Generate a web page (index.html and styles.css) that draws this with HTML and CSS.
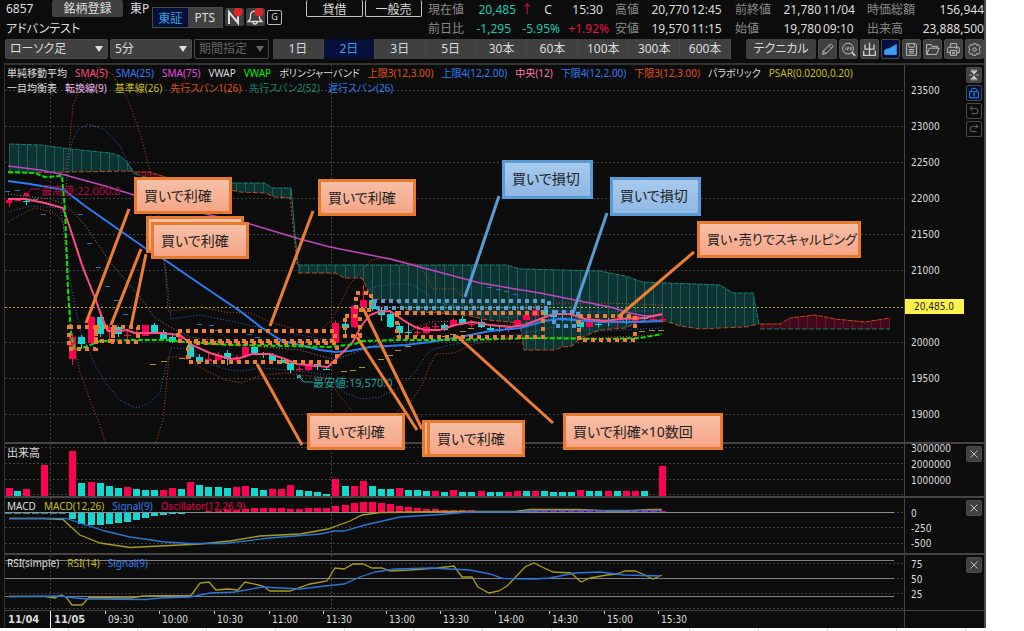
FILE: index.html
```html
<!DOCTYPE html>
<html lang="ja">
<head>
    <meta charset="UTF-8">
    <meta name="viewport" content="width=device-width, initial-scale=1.0">
    <title>6857 アドバンテスト</title>
    <link rel="stylesheet" href="styles.css">
</head>
<body>
<div class="app">
    <header class="header">
        <div class="issue">
            <div class="issue-row">
                <span class="code">6857</span>
                <button class="register">銘柄登録</button>
                <span>東P</span>
            </div>
            <div class="name">アドバンテスト</div>
        </div>
        <div class="market">
            <button class="seg active">東証</button><button class="seg">PTS</button>
        </div>
        <div class="badges">
            <button class="badge" aria-label="ニュース">
                <svg width="18" height="18" viewBox="0 0 18 18"><path d="M4 16V4L13 15V4" fill="none" stroke="#ddd" stroke-width="2"/><circle cx="13" cy="4" r="4.5" fill="#dc2626"/></svg>
            </button>
            <button class="badge" aria-label="アラート">
                <svg width="18" height="18" viewBox="0 0 18 18"><path d="M2 13.5h14l-2.5-3V7.5a4.5 4.5 0 0 0-9 0v3zM7 14a2 2 0 0 0 4 0" fill="none" stroke="#ddd" stroke-width="1.3"/><circle cx="13" cy="4" r="4.5" fill="#dc2626"/></svg>
            </button>
            <button class="badge-g">G</button>
        </div>
        <div class="margin-type">
            <button>貸借</button>
            <button>一般売</button>
        </div>
        <div class="quote">
            <span class="lbl">現在値</span><span class="num down">20,485</span><span class="arrow">↑ <b>C</b></span><span class="num time-now">15:30</span>
            <span class="lbl">高値</span><span class="num">20,770</span><span class="at">12:45</span>
            <span class="lbl">前終値</span><span class="num">21,780</span><span class="at">11/04</span>
            <span class="lbl">時価総額</span><span class="num">156,944</span>

            <span class="lbl">前日比</span><span class="num down diff">-1,295</span><span class="num down">-5.95%</span><span class="num up">+1.92%</span>
            <span class="lbl">安値</span><span class="num">19,570</span><span class="at">11:15</span>
            <span class="lbl">始値</span><span class="num">19,780</span><span class="at">09:10</span>
            <span class="lbl">出来高</span><span class="num">23,888,500</span>
        </div>
    </header>

    <nav class="toolbar">
        <span class="picker kind"><select aria-label="足種"><option>ローソク足</option></select></span>
        <span class="picker span"><select aria-label="分足"><option>5分</option></select></span>
        <span class="picker range off"><select aria-label="期間" disabled><option>期間指定</option></select></span>
        <div class="tabs">
            <button>1日</button><button class="active">2日</button><button>3日</button><button>5日</button><button>30本</button><button>60本</button><button>100本</button><button>300本</button><button>600本</button>
        </div>
        <button class="technical">テクニカル</button>
        <div class="tools">
            <button aria-label="描画"><svg viewBox="0 0 19 19"><path d="M4 15l1-4 7-7q1-1 2 0l1 1q1 1 0 2l-7 7zM11 5l3 3M5 11l3 3"/></svg></button>
            <button aria-label="拡大"><svg viewBox="0 0 19 19"><circle cx="9" cy="8.5" r="6"/><path d="M13 12.5l4 4" stroke-width="2"/><path d="M6.5 7v3M8 7h1.5v1.5H8V10h1.5M11 7h1.5v3H11M11 8.5h1.5" stroke-width=".8"/></svg></button>
            <button aria-label="出来高表示"><svg viewBox="0 0 19 19"><path d="M9.5 2v14M4.5 4v5h10V4M3 11v5h13v-5" stroke-width="1.5"/></svg></button>
            <button class="active" aria-label="チャート"><svg viewBox="0 0 19 19"><path d="M3 15V10h2V9h3V8h2V7h2V6h2V5l2-1v11z" fill="#3b9bf5" stroke="#3b9bf5"/></svg></button>
            <button aria-label="保存"><svg viewBox="0 0 19 19"><path d="M4 3h10l1 1v12H4zM6.5 3v4h6V3M6.5 9.5h6M6.5 11.5h6M6.5 13.5h6"/></svg></button>
            <button aria-label="開く"><svg viewBox="0 0 19 19"><path d="M3 15V4h5l1 2h6v2M3 15L6 8h11l-3 7z"/></svg></button>
            <button aria-label="印刷"><svg viewBox="0 0 19 19"><path d="M6 7V3h7v4M6 13H3V8q0-1 1-1h11q1 0 1 1v5h-3M6 10.5h7V16H6zM8 12.5h3M8 14h3M12 8.5h2"/></svg></button>
            <button aria-label="設定"><svg viewBox="0 0 19 19"><circle cx="9.5" cy="9.5" r="2"/><path d="M8 3h3l1 2 2-1 2 3-1 1.500v2l1 1.500-2 3-2-1-1 2H8l-1-2-2 1-2-3 1-1.500v-2L3 7l2-3 2 1z"/></svg></button>
        </div>
    </nav>

    <main class="chart">
        <section class="pane price">
            <svg id="price" class="plot" viewBox="5 65 899 377" preserveAspectRatio="none"></svg>
            <div class="legend">
                <div><span>単純移動平均</span><span class="c-pink">SMA(5)</span><span class="c-blue">SMA(25)</span><span class="c-purple">SMA(75)</span><span>VWAP</span><span class="c-green">VWAP</span><span>ボリンジャーバンド</span><span class="c-orange">上限3(12,3.00)</span><span class="c-blue">上限4(12,2.00)</span><span class="c-rose">中央(12)</span><span class="c-blue">下限4(12,2.00)</span><span class="c-orange">下限3(12,3.00)</span><span>パラボリック</span><span class="c-yellow">PSAR(0.0200,0.20)</span></div>
                <div><span>一目均衡表</span><span class="c-lilac">転換線(9)</span><span class="c-yellow">基準線(26)</span><span class="c-orange">先行スパン1(26)</span><span class="c-teal">先行スパン2(52)</span><span class="c-blue">遅行スパン(26)</span></div>
            </div>
            <span class="mark high">最高値:22,000.0</span>
            <span class="mark low">最安値:19,570.0</span>
            <div class="axis">
                <div class="ticks"><span>23500</span><span>23000</span><span>22500</span><span>22000</span><span>21500</span><span>21000</span><span><mark>20,485.0</mark></span><span>20000</span><span>19500</span><span>19000</span></div>
                <div class="side">
                    <button aria-label="縮小"><svg viewBox="0 0 16 16"><path d="M4 2.5h8M4 13.5h8M2.5 8h3M7 8h2M10.5 8h3"/><path d="M5 4h6L8 6.5zM5 12h6L8 9.5z" fill="#ccc"/></svg></button>
                    <button class="active" aria-label="固定"><svg viewBox="0 0 16 16"><path d="M3 6.5h10v7H3zM5 6V4q0-1.5 3-1.5T11 4v2M8 8v4M7 9h2"/></svg></button>
                    <button class="hollow" aria-label="元に戻す"><svg viewBox="0 0 16 16"><path d="M6 2.5L3.5 5 6 7.5M4 5h6q2.5 0 2.5 3T10 11H5"/></svg></button>
                    <button class="hollow" aria-label="やり直す"><svg viewBox="0 0 16 16"><path d="M10 2.5L12.5 5 10 7.5M12 5H6q-2.5 0-2.5 3T6 11h5"/></svg></button>
                </div>
            </div>
        </section>
        <section class="pane volume">
            <svg id="volume" class="plot" viewBox="5 444 899 52" preserveAspectRatio="none"></svg>
            <div class="legend title"><div><span>出来高</span></div></div>
            <div class="axis">
                <div class="ticks"><span>3000000</span><span>2000000</span><span>1000000</span></div>
                <div class="side"><button aria-label="閉じる"><svg viewBox="0 0 16 16"><path d="M4 4l8 8M12 4l-8 8"/></svg></button></div>
            </div>
        </section>
        <section class="pane macd">
            <svg id="macd" class="plot" viewBox="5 498 899 55" preserveAspectRatio="none"></svg>
            <div class="legend"><div><span>MACD</span><span class="c-yellow">MACD(12,26)</span><span class="c-blue">Signal(9)</span><span class="c-red">Oscillator(12,26,9)</span></div></div>
            <div class="axis">
                <div class="ticks"><span>0</span><span>-250</span><span>-500</span></div>
                <div class="side"><button aria-label="閉じる"><svg viewBox="0 0 16 16"><path d="M4 4l8 8M12 4l-8 8"/></svg></button></div>
            </div>
        </section>
        <section class="pane rsi">
            <svg id="rsi" class="plot" viewBox="5 555 899 55" preserveAspectRatio="none"></svg>
            <div class="legend"><div><span>RSI(simple)</span><span class="c-yellow">RSI(14)</span><span class="c-blue">Signal(9)</span></div></div>
            <div class="axis">
                <div class="ticks"><span>75</span><span>50</span><span>25</span></div>
                <div class="side"><button aria-label="閉じる"><svg viewBox="0 0 16 16"><path d="M4 4l8 8M12 4l-8 8"/></svg></button></div>
            </div>
        </section>
        <div class="timeline">
            <div class="times"><b>11/04</b><b class="day">11/05</b><span>09:30</span><span>10:00</span><span>10:30</span><span>11:00</span><span>11:30</span><span>13:00</span><span>13:30</span><span>14:00</span><span>14:30</span><span>15:00</span><span>15:30</span></div>
            <div class="corner"></div>
        </div>

        <!-- Trade notes over the chart -->
        <svg id="notes" class="notes" viewBox="5 65 899 563" preserveAspectRatio="none"></svg>
        <div class="note n1">買いで利確</div>
        <div class="note n2b"></div>
        <div class="note n2">買いで利確</div>
        <div class="note n3">買いで利確</div>
        <div class="note blue n4">買いで損切</div>
        <div class="note blue n5">買いで損切</div>
        <div class="note n6">買い・売りでスキャルピング</div>
        <div class="note n7">買いで利確</div>
        <div class="note n8b"></div>
        <div class="note n8">買いで利確</div>
        <div class="note n9">買いで利確×10数回</div>
    </main>
</div>
<footer class="sheet"></footer>
<script src="chart.js"></script>
</body>
</html>
```

FILE: styles.css
```css
:root {
    --bg: #0c0c0c;
    --btn: #404040;
    --line: #444444;
    --text: #dddddd;
    --muted: #8a8a8a;
    --navy: #04103a;
}

* {
    box-sizing: border-box;
}

body {
    margin: 0;
    background-color: #ffffff;
    color: var(--text);
    font-family: "Noto Sans", "Noto Sans CJK JP", sans-serif;
    font-size: 12px;
    font-feature-settings: "palt";
}

.app {
    margin-right: 38px;
    background-color: var(--bg);
    border-right: 2px solid #4a4a4a;
    overflow: hidden;
}

button, select {
    margin: 0;
    padding: 0;
    border: none;
    border-radius: 2px;
    background-color: var(--btn);
    color: var(--text);
    font: inherit;
    font-feature-settings: inherit;
}

/* Header */
.header {
    display: flex;
    align-items: flex-start;
    height: 39px;
    white-space: nowrap;
}

.issue {
    width: 152px;
    padding-left: 6px;
}

.issue-row {
    display: flex;
    height: 18px;
    line-height: 17px;
}

.code {
    width: 46px;
}

.register {
    width: 71px;
    height: 17px;
    margin-right: 7px;
}

.name {
    font-size: 12px;
    line-height: 21px;
}

.market {
    display: flex;
    width: 71px;
    height: 21px;
    margin: 7px 2px 0 0;
    border: 1px solid #4a4a4a;
}

.seg {
    flex: 1;
    border-radius: 0;
}

.seg.active, .tabs .active {
    background-color: var(--navy);
    color: #35a5e5;
}

.badges {
    display: flex;
    align-items: center;
    gap: 2px;
    width: 81px;
    margin-top: 8px;
}

.badge {
    width: 19px;
    height: 18px;
}

.badge svg {
    display: block;
}

.badge-g {
    width: 15px;
    height: 15px;
    border: 1px solid #bbbbbb;
    background-color: transparent;
    font-size: 9px;
    line-height: 12px;
}

.margin-type {
    display: flex;
    gap: 2px;
    width: 122px;
}

.margin-type button {
    width: 57px;
    height: 17px;
    border: 1px solid #c4c4c4;
    border-top: none;
    background-color: transparent;
}

.quote {
    flex: 1;
    display: grid;
    grid-template-columns: 40px 48px 44px 55px 34px 40px 46px 40px 46px 46px 50px 1fr;
    grid-template-rows: 18px 21px;
    line-height: 17px;
    align-items: center;
}

.lbl {
    color: var(--muted);
}

.num {
    text-align: right;
}

.down {
    color: #1cc8b0;
}

.up {
    padding-right: 6px;
    color: #e0104f;
}

.time-now {
    padding-right: 12px;
}

.diff {
    padding-right: 5px;
}

.arrow {
    padding-left: 5px;
    color: #e0104f;
}

.arrow b {
    padding-left: 8px;
    color: var(--text);
    font-weight: normal;
}

.at {
    padding-left: 2px;
}

/* Toolbar */
.toolbar {
    display: flex;
    height: 20px;
    padding-left: 5px;
    line-height: 18px;
}

.picker {
    position: relative;
    margin-right: 2px;
}

.picker select {
    width: 100%;
    height: 20px;
    padding-left: 4px;
    appearance: none;
    border: 1px solid #4a4a4a;
    opacity: 1;
}

.picker::after {
    content: "";
    position: absolute;
    top: 7px;
    right: 5px;
    border: 4px solid transparent;
    border-top: 6px solid #e0e0e0;
    border-bottom: none;
}

.kind {
    width: 103px;
}

.span {
    width: 82px;
}

.range {
    width: 75px;
    margin-right: 4px;
}

.off select {
    background-color: transparent;
    color: #666666;
}

.off::after {
    border-top-color: #666666;
}

.tabs {
    flex: 1;
    display: flex;
    margin-right: 15px;
}

.tabs button {
    flex: 1;
    border-right: 1px solid #4a4a4a;
    border-radius: 0;
}

.technical {
    width: 70px;
    margin-right: 2px;
}

.tools {
    display: flex;
    gap: 2px;
}

.tools button {
    width: 19px;
    border: 1px solid #4a4a4a;
}

.tools svg, .side svg {
    display: block;
    width: 100%;
    fill: none;
    stroke: #cccccc;
}

.tools .active, .side .active {
    background-color: var(--navy);
}

/* Chart */
.chart {
    position: relative;
    margin: 4px 0 0 4px;
    border-top: 2px solid #333333;
    border-left: 1px solid #333333;
}

.pane {
    position: relative;
    display: flex;
    border-bottom: 2px solid var(--line);
}

.plot {
    display: block;
    flex: 1;
    min-width: 0;
}

.price {
    height: 379px;
}

.volume {
    height: 54px;
}

.macd {
    height: 57px;
}

.rsi {
    height: 56px;
    border-bottom-width: 1px;
}

.axis {
    display: flex;
    justify-content: space-between;
    width: 80px;
    border-left: 1px solid var(--line);
    font-family: "DejaVu Sans Condensed", "DejaVu Sans", sans-serif;
    font-size: 10px;
}

.ticks {
    display: flex;
    flex-direction: column;
}

.ticks span {
    padding-left: 6px;
    line-height: 15px;
}

.price .ticks {
    padding-top: 8px;
}

.price .ticks span {
    line-height: 36px;
}

.volume .ticks {
    margin-top: -3px;
}

.volume .ticks span {
    line-height: 16px;
}

.macd .ticks {
    padding-top: 8px;
}

.rsi .ticks {
    padding-top: 2px;
}

.ticks mark {
    margin-left: -6px;
    padding: 2px 10px 2px 9px;
    background-color: #fff04a;
    color: #222222;
}

.side {
    display: flex;
    flex-direction: column;
    gap: 2px;
    padding: 2px 2px 0 0;
}

.side button {
    width: 16px;
    height: 16px;
    border: 1px solid #4a4a4a;
}

.side .active svg {
    stroke: #3b9bf5;
}

.side .hollow {
    background-color: transparent;
}

.side .hollow svg {
    stroke: #777777;
}

.legend {
    position: absolute;
    top: 1px;
    left: 2px;
    font-size: 10px;
    line-height: 15px;
    white-space: nowrap;
}

.legend.title {
    font-size: 11px;
}

.legend div {
    display: flex;
    gap: 8px;
}

.c-pink { color: #ff4d78; }
.c-blue { color: #2f7df0; }
.c-purple { color: #e64be6; }
.c-green { color: #00f000; }
.c-orange { color: #e0500f; }
.c-rose { color: #ff7aa0; }
.c-yellow { color: #c4bc18; }
.c-lilac { color: #f0b8f0; }
.c-teal { color: #13866e; }
.c-red { color: #e8004e; }

.mark {
    position: absolute;
    font-size: 11px;
    line-height: 14px;
}

.high {
    top: 119px;
    left: 36px;
    color: #b00840;
}

.low {
    top: 311px;
    left: 308px;
    color: #17a89c;
}

.timeline {
    display: flex;
    height: 17px;
}

.times {
    flex: 1;
    display: grid;
    grid-template-columns: 45fr 55fr 54fr 55fr 55fr 54fr 63fr 54fr 55fr 54fr 55fr 54fr 246fr;
    font-family: "DejaVu Sans Condensed", "DejaVu Sans", sans-serif;
    font-size: 10px;
    line-height: 17px;
}

.times > * {
    padding-left: 3px;
    background: linear-gradient(#cccccc, #cccccc) no-repeat 0 0 / 1px 3px;
}

.times b {
    background: none;
    font-size: 11px;
}

.times .day {
    border-left: 1px solid #ffffff;
}

.corner {
    width: 80px;
    border-left: 1px solid var(--line);
}

/* Notes */
.notes {
    position: absolute;
    top: 0;
    left: 0;
    width: calc(100% - 80px);
    height: 563px;
}

.note {
    position: absolute;
    height: 37px;
    width: 98px;
    padding-left: 7px;
    border: 3px solid #e87a2d;
    background: linear-gradient(#f6bfa8, #f6a586);
    color: #222222;
    font-size: 14px;
    line-height: 31px;
    white-space: nowrap;
}

.note.blue {
    width: 91px;
    height: 39px;
    border-color: #5b9bd5;
    background: linear-gradient(#a8c9ec, #8fb8e6);
}

.n1 { left: 129px; top: 112px; }
.n2b { left: 141px; top: 151px; }
.n2 { left: 146px; top: 157px; }
.n3 { left: 313px; top: 114px; }
.n4 { left: 497px; top: 95px; }
.n5 { left: 605px; top: 112px; }
.n6 { left: 692px; top: 156px; }
.n7 { left: 302px; top: 348px; }
.n8b { left: 417px; top: 355px; }
.n8 { left: 422px; top: 355px; }
.n9 { left: 558px; top: 348px; }

.note.n6 {
    width: 164px;
    font-size: 13px;
}

.note.n9 {
    width: 160px;
}

/* Cell edges of the sheet under the panel */
.sheet {
    height: 3px;
    background: repeating-linear-gradient(90deg, #ffffff 0 68px, #dddddd 68px 69px);
}
```

FILE: chart.js
```javascript
const NS = "http://www.w3.org/2000/svg";
const STEP = 9.07;
const FIRST = 72.4;
const UP = "#ff0055";
const DOWN = "#14d8d0";

function add(parent, tag, attrs) {
    const el = document.createElementNS(NS, tag);
    for (const key in attrs) el.setAttribute(key, attrs[key]);
    parent.appendChild(el);
    return el;
}

function line(svg, points, color, width, dash) {
    const attrs = { points: points, fill: "none", stroke: color, "stroke-width": width };
    if (dash) attrs["stroke-dasharray"] = dash;
    add(svg, "polyline", attrs);
}

function rect(svg, x, y, w, h, fill) {
    add(svg, "rect", { x: x, y: y, width: w, height: h, fill: fill });
}

// Dotted grid, horizontal lines at ys plus the two day/session lines
function grid(svg, ys, top, bottom) {
    ys.forEach(y => line(svg, `5,${y} 904,${y}`, "#404040", 1, "2 2"));
    [50.5, 331.5].forEach(x => line(svg, `${x},${top} ${x},${bottom}`, "#404040", 1, "2 2"));
}

const barX = i => FIRST + STEP * i;

// Price pane
const price = document.getElementById("price");
grid(price, [90.5, 126.5, 162.5, 198.5, 234.5, 270.5, 342.5, 378.5, 414.5], 65, 442);

function cloud(top, bottom, fill, stripe, topColor, bottomColor, id) {
    const clip = add(price, "clipPath", { id: id });
    const shape = top + " " + bottom.split(" ").reverse().join(" ");
    add(clip, "polygon", { points: shape });
    add(price, "polygon", { points: shape, fill: fill });
    const g = add(price, "g", { "clip-path": `url(#${id})` });
    for (let i = -8; i < 92; i++) rect(g, Math.round(barX(i)), 100, 1, 300, stripe);
    line(price, top, topColor, 1, "5 1");
    line(price, bottom, bottomColor, 1, "5 2");
}

const T = ["#0f3232", "#15645c", "#178070", "#c04a18"];
cloud("9,144 40,145 70,149 110,153 120,156 127,162 135,174", "9,173 70,172 134,171", ...T, "c1");
cloud("135,172 150,172 165,177 231,190", "135,174 165,183 231,190", "#400a1c", "#70102e", "#c04a18", "#178070", "c2");
cloud("225,183 265,183 272,188 291,188", "225,189 240,192 265,193 275,197 291,198", ...T, "c3");
line(price, "291,188 295,235 299,273", "#178070", 1);
line(price, "290,198 297,265", "#c04a18", 1, "2 2");
cloud("298,265 506,265 520,269 560,270 600,271 625,276 642,282 720,285 733,293 753,293 759,324",
    "298,273 335,273 345,278 362,278 372,299 395,300 405,309 415,312 440,313 470,316 488,320 520,323 524,350 555,350 562,347 572,346 580,338 600,330 625,328 640,321 665,321 680,326 700,329 720,328 745,327 759,324", ...T, "c4");
cloud("760,324 780,324 790,318 815,315 835,319 865,322 890,318", "760,329 890,329", "#400a1c", "#70102e", "#c04a18", "#178070", "c5");

line(price, "5,307.5 904,307.5", "#b5a642", 1, "2 2");

// Bollinger bands
const ORANGE = "#cc4e1c";
const BLUE = "#2c6cd0";
line(price, "65,175 69,150 73,105 85,80 100,67 112,74 128,100 140,133 150,170 160,225 165,265 168,311 180,310 200,307 225,312 250,313 270,322 315,335 332,320 350,284 360,272 372,260 385,257 405,262 420,265 433,289 455,289 468,303 500,314 550,303 600,303 640,304 662,305", ORANGE, 1, "1 2");
line(price, "8,222 22,214 35,208 55,213 63,222 66,260 72,335 80,372 90,400 100,425 105,442", ORANGE, 1, "1 2");
line(price, "156,442 163,420 167,380 169,357 185,357 205,370 225,380 242,383 262,375 285,373 328,378 340,396 352,411", ORANGE, 1, "1 2");
line(price, "397,412 412,400 422,385 430,365 436,354 455,353 470,345 500,339 560,337 590,338 662,335", ORANGE, 1, "1 2");
line(price, "66,190 68,165 72,142 78,130 88,124 105,130 120,146 135,178 150,215 162,250 167,280 171,319 200,315 240,323 262,328 300,335 330,340 345,320 358,297 372,288 390,284 410,284 425,292 433,301 470,310 510,318 540,311 600,312 640,311 662,310", BLUE, 1, "1 2");
line(price, "8,212 30,206 60,208 66,240 70,280 80,330 95,365 108,386 120,400 135,408 148,404 160,393 165,370 171,348 190,349 205,362 225,369 240,371 262,368 300,371 325,375 345,393 362,399 380,397 400,387 415,372 430,350 450,345 500,338 560,326 600,331 662,328", BLUE, 1, "1 2");
line(price, "8,194 50,199 66,205 85,225 110,262 140,297 155,318 170,327 190,337 240,345 300,350 335,360 370,347 400,335 430,322 460,321 500,326 560,318 662,322", "#b07878", 1, "1 2");

// Parabolic
[[153, 364], [164, 361], [182, 358], [344, 371], [353, 370], [362, 367], [381, 359], [390, 355], [398, 350], [408, 346], [445, 336], [453, 334], [463, 331], [471, 328], [642, 331], [652, 330], [661, 330]]
    .forEach(p => rect(price, p[0] - 3, p[1], 6, 1, "#a89c18"));
[[8, 191], [18, 190], [36, 199], [44, 214], [81, 214], [90, 243], [99, 267], [108, 286], [117, 300], [126, 314], [200, 324], [212, 325], [218, 330], [250, 334], [258, 337], [490, 287], [499, 289], [507, 291], [516, 294], [598, 305]]
    .forEach(p => rect(price, p[0] - 3, p[1], 5, 1, "#2c6fc8"));

// Candles: [direction, top, bottom, high, low]
const candles = [
    [1, 337, 359, 333, 365], [0, 337, 344, 335, 349], [1, 317, 343, 316, 345], [0, 317, 334, 313, 337],
    [1, 327, 331, 325, 340], [0, 327, 334, 326, 337], [1, 335, 336, 330, 340], [1, 333, 334, 329, 338],
    [1, 325, 336, 325, 336], [0, 325, 332, 323, 333], [0, 332, 339, 330, 340], [0, 337, 342, 335, 343],
    [1, 337, 339, 335, 342], [0, 345, 357, 342, 359], [0, 357, 362, 354, 363], [1, 359, 361, 352, 364],
    [1, 355, 360, 352, 361], [0, 353, 359, 350, 365], [1, 358, 360, 355, 362], [1, 347, 356, 345, 358],
    [0, 347, 353, 345, 355], [0, 354, 355, 352, 358], [0, 355, 361, 353, 362], [0, 360, 363, 358, 364],
    [0, 363, 370, 361, 373], [1, 369, 370, 366, 372], [1, 364, 370, 363, 371], [0, 364, 367, 362, 370],
    [0, 369, 370, 366, 370], [1, 323, 343, 320, 345], [0, 324, 328, 322, 335], [1, 306, 327, 305, 328],
    [1, 300, 307, 285, 310], [0, 300, 309, 297, 311], [0, 310, 315, 308, 321], [0, 314, 327, 312, 328],
    [0, 326, 333, 323, 336], [0, 332, 333, 323, 335], [1, 332, 333, 325, 336], [1, 327, 333, 325, 334],
    [1, 326, 327, 323, 330], [0, 325, 330, 323, 331], [1, 320, 326, 318, 327], [0, 319, 323, 316, 325],
    [1, 324, 325, 320, 327], [0, 322, 327, 319, 328], [0, 328, 330, 325, 331], [0, 329, 331, 327, 332],
    [1, 328, 330, 326, 332], [1, 320, 325, 319, 326], [1, 315, 320, 312, 321], [1, 310, 316, 308, 317],
    [0, 310, 315, 308, 317], [0, 315, 317, 313, 319], [0, 318, 319, 315, 321], [0, 319, 320, 316, 322],
    [0, 322, 327, 321, 328], [1, 322, 327, 321, 328], [0, 324, 325, 321, 327], [0, 320, 321, 318, 326],
    [1, 321, 322, 317, 328], [0, 321, 322, 317, 324], [1, 316, 321, 313, 323], [0, 317, 319, 315, 321],
    [1, 319, 320, 316, 322], [1, 319, 320, 316, 323]
];
candles.forEach((c, i) => {
    const x = Math.round(barX(i));
    const color = c[0] ? UP : DOWN;
    rect(price, x, c[3], 1, c[4] - c[3], color);
    rect(price, x - 3, c[1], 7, c[2] - c[1], color);
});
rect(price, 6, 200, 6, 3, UP);
rect(price, 9, 198, 1, 9, UP);
rect(price, 15, 200, 6, 1, UP);
rect(price, 24, 193, 5, 3, UP);
rect(price, 23, 201, 7, 1, DOWN);
rect(price, 26, 198, 1, 7, DOWN);
line(price, "27,194 31,189 41,189", "#b00840", 1);
line(price, "299,377 304,382 313,382", "#17a89c", 1);
rect(price, 297, 375, 4, 3, "#17a89c");

// Moving averages and VWAP
line(price, "8,166 40,170 65,175 105,186 134,195 210,215 250,224 300,239 330,247 390,259 420,267 480,283 540,293 580,301 610,307 630,313 645,316 662,315", "#c246c2", 1.5);
line(price, "8,181 30,184 64,190 85,206 145,248 165,260 200,284 240,311 262,328 282,341 300,345 320,350 335,352 350,351 370,347 405,345 430,342 460,337 490,331 520,328 545,321 560,319 600,322 640,322 662,321", "#2b7cf6", 2);
line(price, "8,199 25,199 45,203 63,208 70,228 82,265 95,298 103,320 108,331 120,331 127,330 135,333 160,333 180,335 192,345 210,353 230,359 240,358 252,354 270,354 285,359 297,364 328,367 338,357 352,343 362,325 370,315 378,312 390,311 403,320 415,327 425,330 440,330 455,325 472,322 490,325 510,327 525,325 545,317 553,314 570,314 585,319 605,321 620,319 645,318 662,314", "#ff4d80", 2);
line(price, "8,172 35,173 45,177 62,176 65,210 68,290 71,335 75,350 88,346 100,341 130,340 165,340 185,342 230,345 290,346 330,347 355,344 362,341 400,340 460,340 540,338 600,339 640,338 662,334", "#00e800", 2, "5 2");

// Volume pane
const volume = document.getElementById("volume");
grid(volume, [447.5, 463.5, 479.5, 494.5], 444, 496);
const volumes = [45, 13, 14, 13, 10, 8, 9, 7, 6, 6, 6, 8, 7, 14, 11, 9, 9, 8, 9, 10, 8, 6, 7, 7, 11, 6, 5, 4, 2, 17, 10, 10, 15, 10, 7, 7, 8, 6, 6, 5, 5, 4, 6, 4, 4, 5, 4, 4, 4, 5, 5, 5, 5, 4, 4, 4, 6, 5, 5, 5, 5, 5, 5, 5, 0, 30];
const rising = [0, 2, 6, 10, 11, 13, 18, 19, 22, 23, 24, 29, 31, 32, 36, 40, 42, 45, 48, 49, 51, 56, 59, 61, 62, 65];
volumes.forEach((v, i) => rect(volume, Math.round(barX(i)) - 3, 496 - v, 7, v, rising.includes(i) ? UP : DOWN));
rect(volume, 6, 488, 7, 8, UP);
rect(volume, 14, 491, 7, 5, DOWN);
rect(volume, 23, 489, 7, 7, UP);
rect(volume, 41, 465, 7, 31, UP);

// MACD pane
const macd = document.getElementById("macd");
grid(macd, [512.5, 527.5, 543.5], 498, 553);
const osc = [-7, -12, -13, -13, -12, -11, -10, -8, -6, -4, -3, -2, -2, -1, -1, 1, 1, 2, 2, 3, 4, 4, 4, 4, 3, 3, 4, 4, 4, 6, 7, 9, 10, 10, 9, 8, 6, 5, 4, 3, 3, 2, 2, 2, 2, 1, 1, 1, 1, 1, 2, 2, 2, 2, 2, 2, 2, 1, 1, 1, 1, 1, 1, 1, 1, 1];
osc.forEach((v, i) => rect(macd, Math.round(barX(i)) - 3, v > 0 ? 512 - v : 512, 7, Math.abs(v), v > 0 ? UP : DOWN));
line(macd, "5,512.5 894,512.5", "#8c8c94", 1);
line(macd, "5,513.5 66,513.5", "#3a8c88", 1, "7 2");
line(macd, "9,518.5 43,518.5 63,519.5 70,526 80,535 100,543 130,547.5 170,545.5 200,544 230,541 260,536 300,534 328,529 350,521 362,515 380,512.5 440,511.5 515,511.5 530,509.5 580,509.5 607,511 627,511 650,509.5 662,509.5", "#a89c18", 1.3);
line(macd, "9,518.5 66,518.5 80,523 105,531 130,537 165,542 190,543.5 225,543.5 270,538 320,534 335,531 344,531 365,525 400,517 440,514.5 470,512 515,512 545,510.5 662,510.5", "#2b74dc", 1.3);

// RSI pane
const rsi = document.getElementById("rsi");
grid(rsi, [563.5, 578.5, 593.5, 608.5], 555, 610);
[560.5, 578.5, 596.5].forEach(y => line(rsi, `5,${y} 894,${y}`, "#80808a", 1));
line(rsi, "9,596.5 45,596.5 55,598 61,595 66,597 72,605 82,605 89,597.5 130,598 143,596 191,595.5 200,583 209,582 216,590 228,589 238,590 245,582 263,586 270,591 290,591 310,584 327,581 335,568 344,569 353,564 363,564 372,568 382,568 390,571 410,570 437,568 454,566 462,577 472,577 478,587 489,593 499,591 507,586 525,567 534,563 542,567 553,572 571,573 581,582 590,578 607,575 617,574 625,571 635,571 645,575 653,579 662,575", "#a89c18", 1.3);
line(rsi, "9,596.5 60,596 75,598 90,599 145,599.5 160,598 190,597 210,593 235,592 262,587 300,589 325,586 344,584 360,577 375,572 395,569 430,568 470,570 490,574 503,578.5 535,579 550,578 575,573 600,572 625,575 660,576", "#2b74dc", 1.3);

// Trade notes: dotted ranges and leader lines
const notes = document.getElementById("notes");
const NOTE = "#ed7d31";
const NOTE_BLUE = "#5b9bd5";
[
    [69, 327, 27, 22, NOTE], [96, 327, 17, 14, NOTE], [113, 327, 25, 15, NOTE],
    [178, 331, 157, 10, NOTE], [188, 343, 149, 19, NOTE], [345, 316, 15, 20, NOTE],
    [356, 293, 15, 17, NOTE], [373, 301, 176, 7, NOTE_BLUE], [397, 313, 146, 24, NOTE],
    [554, 312, 24, 14, NOTE_BLUE], [579, 316, 56, 24, NOTE]
].forEach(r => add(notes, "rect", { x: r[0], y: r[1], width: r[2], height: r[3], fill: "none", stroke: r[4], "stroke-width": 4, "stroke-dasharray": "4 4" }));
["129,209 86,323", "141,249 111,325", "146,254 131,326", "313,211 270,326", "257,364 302,445",
    "363,308 422,429", "357,337 417,430", "457,336 553,423", "694,252 618,317"].forEach(p => line(notes, p, NOTE, 3));
["499,196 465,297", "607,213 573,313"].forEach(p => line(notes, p, NOTE_BLUE, 3));
```
